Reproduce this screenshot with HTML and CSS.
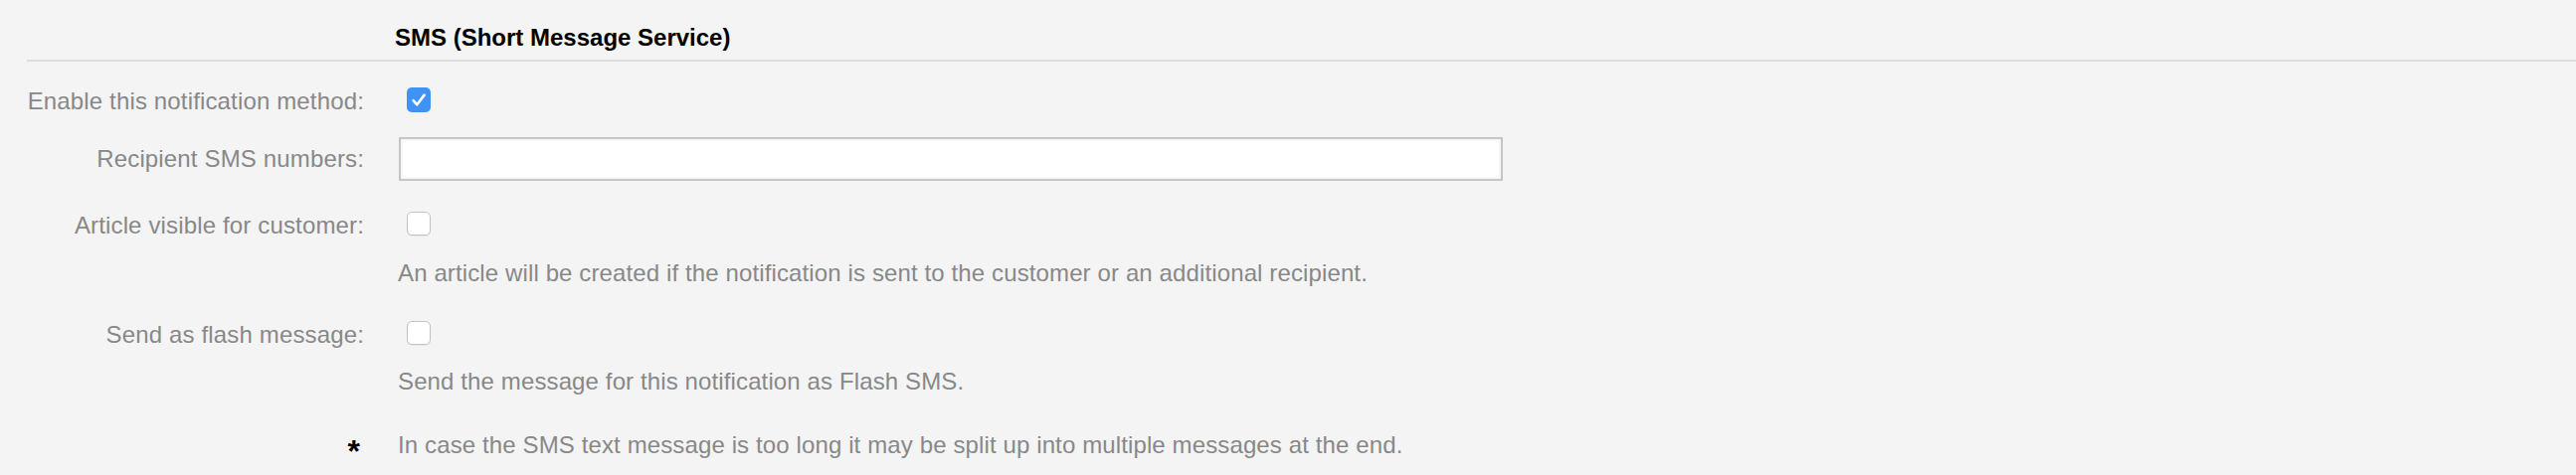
FILE: index.html
```html
<!DOCTYPE html>
<html lang="en">
<head>
<meta charset="utf-8">
<title>SMS (Short Message Service)</title>
<link rel="stylesheet" href="styles.css">
</head>
<body>
<div class="page">
  <div class="section-head">
    <h2 class="section-title">SMS (Short Message Service)</h2>
  </div>
  <div class="form">
    <div class="row row-enable">
      <label class="label">Enable this notification method:</label>
      <div class="field">
        <span class="checkbox checked">
          <svg width="24" height="25" viewBox="0 0 24 25"><rect x="0" y="0" width="24" height="25" rx="5" ry="5" fill="#3e93f5"/><path d="M6.5 13.2 L10.3 17.3 L17.6 7.6" fill="none" stroke="#fff" stroke-width="2.6" stroke-linecap="round" stroke-linejoin="round"/></svg>
        </span>
      </div>
    </div>
    <div class="row row-recipient">
      <label class="label label-input">Recipient SMS numbers:</label>
      <div class="field">
        <input class="text-input" type="text">
      </div>
    </div>
    <div class="row row-article">
      <label class="label">Article visible for customer:</label>
      <div class="field">
        <span class="checkbox"></span>
        <p class="desc">An article will be created if the notification is sent to the customer or an additional recipient.</p>
      </div>
    </div>
    <div class="row row-flash">
      <label class="label">Send as flash message:</label>
      <div class="field">
        <span class="checkbox"></span>
        <p class="desc">Send the message for this notification as Flash SMS.</p>
      </div>
    </div>
    <div class="row row-note">
      <div class="label"><span class="asterisk">*</span></div>
      <div class="field">
        <p class="note">In case the SMS text message is too long it may be split up into multiple messages at the end.</p>
      </div>
    </div>
  </div>
</div>
</body>
</html>
```

FILE: styles.css
```css
html, body {
  margin: 0;
  padding: 0;
  background: #f4f4f4;
}

body {
  font-family: "Liberation Sans", Arial, Helvetica, sans-serif;
  font-size: 24px;
  color: #888888;
}

.page {
  width: 2590px;
}

.section-head {
  margin-left: 27px;
  padding-top: 24px;
  padding-bottom: 8px;
  border-bottom: 2px solid #dddddd;
}

.section-title {
  margin: 0;
  padding-left: 370px;
  font-size: 24px;
  line-height: 28px;
  font-weight: bold;
  color: #000000;
}

.form {
  display: flex;
  flex-direction: column;
}

.row {
  display: grid;
  grid-template-columns: 366px 1fr;
  column-gap: 34px;
  align-items: start;
}

.row-enable {
  margin-top: 26px;
}

.row-recipient {
  margin-top: 22px;
}

.row-article {
  margin-top: 31px;
}

.row-flash {
  margin-top: 34px;
}

.row-note {
  margin-top: 36px;
}

.label {
  text-align: right;
  line-height: 28px;
  white-space: nowrap;
  color: #888888;
  letter-spacing: 0.15px;
}

.label-input {
  padding-top: 8px;
}

.field {
  display: flex;
  flex-direction: column;
  align-items: flex-start;
}

.checkbox {
  display: block;
  margin-left: 9px;
  width: 24px;
  height: 24px;
  box-sizing: border-box;
  border: 1.5px solid #c2c2c2;
  border-radius: 5px;
  background: #ffffff;
  box-shadow: 0 1px 1px rgba(0, 0, 0, 0.06);
}

.checkbox.checked {
  border: none;
  height: 25px;
  background: transparent;
  box-shadow: none;
}

.checkbox svg {
  display: block;
}

.text-input {
  display: block;
  margin: 0 0 0 1px;
  width: 1110px;
  height: 44px;
  box-sizing: border-box;
  border: 2px solid #c6c6c6;
  border-radius: 0;
  background: #ffffff;
  box-shadow: inset 0 0 4px rgba(0, 0, 0, 0.08);
  padding: 0 8px;
  font-family: inherit;
  font-size: 24px;
  outline: none;
}

.desc {
  margin: 24px 0 0 0;
  line-height: 28px;
  color: #888888;
  white-space: nowrap;
  letter-spacing: 0.12px;
}

.row-flash .desc {
  margin-top: 23px;
}

.note {
  margin: 0;
  line-height: 28px;
  color: #888888;
  white-space: nowrap;
  letter-spacing: 0.12px;
}

.asterisk {
  display: inline-block;
  padding-right: 4px;
  font-size: 32px;
  font-weight: bold;
  color: #000000;
  line-height: 28px;
  vertical-align: -9px;
  letter-spacing: 0;
}
```
